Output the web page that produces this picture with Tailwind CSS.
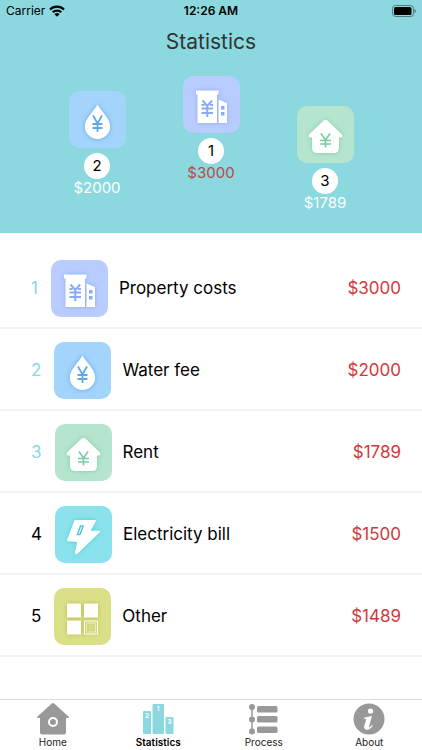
<!DOCTYPE html>
<html lang="en">
<head>
  <meta charset="UTF-8" />
  <meta name="viewport" content="width=device-width, initial-scale=1.0"/>
  <title>Statistics</title>
  <script src="https://cdn.jsdelivr.net/npm/@tailwindcss/browser@4"></script>
</head>
<body class="min-h-screen flex flex-col bg-white text-black font-['Inter',sans-serif]">

  <!-- Shared icons -->
  <svg class="hidden" aria-hidden="true">
    <symbol id="property" viewBox="0 0 57 57">
      <path fill="#fff" d="M13 14.500h22.500v4H34V47H14.500V18.500H13zM35.500 23.500l8.500 3.500v20h-8.500z"/>
      <path fill="none" stroke="#8aaaf5" stroke-width="2" d="M19.500 24.500l4.800 5.500 4.800-5.500M18.500 29h3M27 29h3M18.500 32.500h11.500M18.500 37h11.500M24.300 29.500V41"/>
      <path fill="#8aaaf5" d="M38 30h3.500v3.500H38zM38 36h3.500v3.500H38z"/>
    </symbol>
    <symbol id="water" viewBox="0 0 57 57">
      <path fill="#fff" d="M28.500 13.500C32 20 41.200 27.500 41.200 35.500a12.700 12.500 0 0 1-25.400 0C15.800 27.500 25 20 28.500 13.500z"/>
      <path fill="none" stroke="#5fa9e8" stroke-width="1.800" d="M24 24.500l4.500 8 4.500-8M23.500 33h10M23.500 37h10M28.500 32v9"/>
    </symbol>
    <symbol id="rent" viewBox="0 0 57 57">
      <path fill="#fff" d="M26.500 14.500q2-1.500 4 0L45 28.500q1.500 2.500-1 3H42V42q0 5-5 5H20q-5 0-5-5V31.500h-2q-2.500-.5-1-3z"/>
      <path fill="none" stroke="#7dcba4" stroke-width="1.700" d="M24 27.500l4.500 6.500 4.500-6.500M23 34.500h11M23 38h11M28.500 34v7.500"/>
    </symbol>
    <symbol id="electricity" viewBox="0 0 57 57">
      <path fill="#fff" stroke="#fff" stroke-width="1.500" stroke-linejoin="round" d="M20 14.700h20.300L34.500 25.500h10L22 47.200h-1.500L23 35.300 12.700 34.500z"/>
      <path fill="none" stroke="#4bcbdc" stroke-width="1.500" d="M25.500 20h2.500l-3 8.500h-2.500z"/>
    </symbol>
    <symbol id="other" viewBox="0 0 57 57">
      <path fill="#fff" d="M13 15.500h14v14H13zM30 15.500h14v14H30zM13 32.500h14v14H13z"/>
      <path fill="none" stroke="#fff" d="M30.500 33h13v13h-13z"/>
      <path fill="none" stroke="#fff" stroke-width=".5" d="M32.500 35h9v9h-9z"/>
    </symbol>
  </svg>

  <header class="h-[233px] bg-[#8bd8df]">
    <!-- Status bar -->
    <div class="grid grid-cols-3 items-center h-[22px] px-1.5 text-[12px]">
      <div class="flex items-center gap-1">
        <span>Carrier</span>
        <svg class="w-4 h-3" viewBox="0 0 16 12" fill="none" stroke="#000" stroke-width="2.200" aria-hidden="true">
          <path d="M1 4.500a10 10 0 0 1 14 0M3.700 7.300a6.200 6.200 0 0 1 8.600 0"/>
          <path fill="#000" stroke="none" d="M5.500 9.200a3.600 3.600 0 0 1 5 0L8 11.800z"/>
        </svg>
      </div>
      <span class="text-center font-semibold">12:26 AM</span>
      <svg class="w-6 h-3 justify-self-end" viewBox="0 0 24 12" aria-hidden="true">
        <rect x=".5" y=".5" width="21" height="11" rx="3" fill="none" stroke="#4d7b80"/>
        <rect x="2" y="2" width="17.500" height="8" rx="1.500"/>
        <path fill="#4d7b80" d="M22.500 4q1.500.5 1.500 2t-1.500 2z"/>
      </svg>
    </div>

    <h1 class="mt-1 text-center text-[21px] leading-8 text-[#333]">Statistics</h1>

    <!-- Podium -->
    <div class="flex justify-center gap-[57px] mt-[18px] text-[15px]">
      <div class="flex flex-col items-center w-[57px] pt-[15px]">
        <div class="size-[57px] rounded-[10px] bg-[#a3d4fb]"><svg class="size-full drop-shadow-[0_0_2px_#5fa9e8]" aria-hidden="true"><use href="#water"/></svg></div>
        <span class="size-[26px] mt-[5px] rounded-full bg-white text-center leading-[26px]">2</span>
        <span class="leading-[18px] text-white">$2000</span>
      </div>
      <div class="flex flex-col items-center w-[57px]">
        <div class="size-[57px] rounded-[10px] bg-[#b9ccfe]"><svg class="size-full drop-shadow-[0_0_2px_#8aaaf5]" aria-hidden="true"><use href="#property"/></svg></div>
        <span class="size-[26px] mt-[5px] rounded-full bg-white text-center leading-[26px]">1</span>
        <span class="leading-[18px] text-[#b94a4c]">$3000</span>
      </div>
      <div class="flex flex-col items-center w-[57px] pt-[30px]">
        <div class="size-[57px] rounded-[10px] bg-[#b5e5ce]"><svg class="size-full drop-shadow-[0_0_2px_#7dcba4]" aria-hidden="true"><use href="#rent"/></svg></div>
        <span class="size-[26px] mt-[5px] rounded-full bg-white text-center leading-[26px]">3</span>
        <span class="leading-[18px] text-white">$1789</span>
      </div>
    </div>
  </header>

  <main class="flex-1 pt-[14px]">
    <ul class="text-[17px]">
      <li class="flex items-center h-[82px] pt-[3px] pl-[31px] pr-[21px] border-b-2 border-[#f1f1f1]">
        <span class="text-[#8bd8df]">1</span>
        <div class="size-[57px] ml-[13px] mr-[11px] rounded-[10px] bg-[#b9ccfe]"><svg class="size-full drop-shadow-[0_0_2px_#8aaaf5]" aria-hidden="true"><use href="#property"/></svg></div>
        <span>Property costs</span>
        <span class="ml-auto text-[#d0393c]">$3000</span>
      </li>
      <li class="flex items-center h-[82px] pt-[3px] pl-[31px] pr-[21px] border-b-2 border-[#f1f1f1]">
        <span class="text-[#8bd8df]">2</span>
        <div class="size-[57px] ml-[13px] mr-[11px] rounded-[10px] bg-[#a3d4fb]"><svg class="size-full drop-shadow-[0_0_2px_#5fa9e8]" aria-hidden="true"><use href="#water"/></svg></div>
        <span>Water fee</span>
        <span class="ml-auto text-[#d0393c]">$2000</span>
      </li>
      <li class="flex items-center h-[82px] pt-[3px] pl-[31px] pr-[21px] border-b-2 border-[#f1f1f1]">
        <span class="text-[#8bd8df]">3</span>
        <div class="size-[57px] ml-[13px] mr-[11px] rounded-[10px] bg-[#b5e5ce]"><svg class="size-full drop-shadow-[0_0_2px_#7dcba4]" aria-hidden="true"><use href="#rent"/></svg></div>
        <span>Rent</span>
        <span class="ml-auto text-[#d0393c]">$1789</span>
      </li>
      <li class="flex items-center h-[82px] pt-[3px] pl-[31px] pr-[21px] border-b-2 border-[#f1f1f1]">
        <span>4</span>
        <div class="size-[57px] ml-[13px] mr-[11px] rounded-[10px] bg-[#8ae3ec]"><svg class="size-full drop-shadow-[0_0_2px_#4bcbdc]" aria-hidden="true"><use href="#electricity"/></svg></div>
        <span>Electricity bill</span>
        <span class="ml-auto text-[#d0393c]">$1500</span>
      </li>
      <li class="flex items-center h-[82px] pt-[3px] pl-[31px] pr-[21px] border-b-2 border-[#f1f1f1]">
        <span>5</span>
        <div class="size-[57px] ml-[13px] mr-[11px] rounded-[10px] bg-[#dbdf87]"><svg class="size-full drop-shadow-[0_0_2px_#b5bb4a]" aria-hidden="true"><use href="#other"/></svg></div>
        <span>Other</span>
        <span class="ml-auto text-[#d0393c]">$1489</span>
      </li>
    </ul>
  </main>

  <!-- Tab bar -->
  <nav class="grid grid-cols-4 h-[51px] border-t border-[#dcdcdc] text-[10px] leading-3 text-[#222]">
    <a href="#" class="flex flex-col items-center gap-px pt-[3px]">
      <svg class="size-8" viewBox="0 0 32 32" aria-hidden="true">
        <path fill="#999" d="M14.800.600q1.200-1 2.400 0L31.500 13.500q.8 1.500-.5 1.500h-2v14.500q0 2-2 2H5q-2 0-2-2V15H1q-1.300 0-.5-1.500z"/>
        <circle cx="16" cy="19" r="4" fill="none" stroke="#fff" stroke-width="2"/>
      </svg>
      Home
    </a>
    <a href="#" aria-current="page" class="flex flex-col items-center gap-px pt-[3px] font-semibold text-black">
      <svg class="size-8" viewBox="0 0 32 32" fill="#8bd8df" aria-hidden="true">
        <rect x="1" y="8" width="8" height="23" rx="1"/>
        <rect x="10.500" y="1" width="11.500" height="30" rx="1"/>
        <rect x="23.500" y="14" width="8" height="17" rx="1"/>
        <g fill="#fff" font-size="6" font-weight="700" text-anchor="middle">
          <text x="5" y="14.500">2</text>
          <text x="16" y="7.500">1</text>
          <text x="27.500" y="20.500">3</text>
        </g>
      </svg>
      Statistics
    </a>
    <a href="#" class="flex flex-col items-center gap-px pt-[3px]">
      <svg class="size-8" viewBox="0 0 32 32" fill="#999" aria-hidden="true">
        <path stroke="#999" stroke-width="1.500" d="M4 4v25"/>
        <circle cx="4" cy="4" r="3"/><circle cx="4" cy="16.500" r="3"/><circle cx="4" cy="28.500" r="3"/>
        <rect x="9" y="3" width="20.500" height="6.500" rx="1.500"/>
        <rect x="9" y="13" width="20.500" height="6.500" rx="1.500"/>
        <rect x="9" y="23.500" width="20.500" height="6.500" rx="1.500"/>
      </svg>
      Process
    </a>
    <a href="#" class="flex flex-col items-center gap-px pt-[3px]">
      <svg class="size-8" viewBox="0 0 32 32" aria-hidden="true">
        <circle cx="16" cy="16" r="15.500" fill="#999"/>
        <circle cx="17.500" cy="8" r="2.600" fill="#fff"/>
        <path fill="#fff" d="M11.500 14.500l7.500-1.500-3 10.500q-.3 1.300 1.500 0l1.500-1.500.8.800q-3 4.500-6.500 4-3-.8-2-4l2-6.800-2.300-.3z"/>
      </svg>
      About
    </a>
  </nav>

</body>
</html>
